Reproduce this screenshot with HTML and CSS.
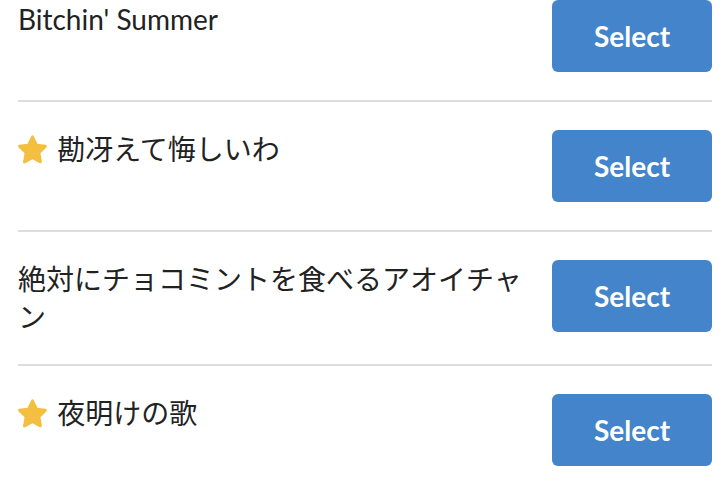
FILE: index.html
```html
<!DOCTYPE html>
<html lang="ja">
<head>
<meta charset="utf-8">
<link rel="stylesheet" href="styles.css">
</head>
<body>
<ul class="list">
  <li class="row">
    <div class="title">Bitchin' Summer</div>
    <button class="select">Select</button>
  </li>
  <li class="row">
    <div class="title"><svg class="star" viewBox="2 2 20 20"><path d="M12 2.2c.4 0 .7.2.9.6l2.5 5.2 5.6.8c.9.1 1.2 1.2.6 1.8l-4.1 4 1 5.7c.2.9-.8 1.5-1.5 1.1L12 18.7l-5 2.7c-.8.4-1.7-.2-1.5-1.1l1-5.7-4.1-4c-.7-.6-.3-1.7.6-1.8l5.6-.8 2.5-5.2c.2-.4.5-.6.9-.6z"/></svg> 勘冴えて悔しいわ</div>
    <button class="select">Select</button>
  </li>
  <li class="row">
    <div class="title">絶対にチョコミントを食べるアオイチャン</div>
    <button class="select">Select</button>
  </li>
  <li class="row">
    <div class="title"><svg class="star" viewBox="2 2 20 20"><path d="M12 2.2c.4 0 .7.2.9.6l2.5 5.2 5.6.8c.9.1 1.2 1.2.6 1.8l-4.1 4 1 5.7c.2.9-.8 1.5-1.5 1.1L12 18.7l-5 2.7c-.8.4-1.7-.2-1.5-1.1l1-5.7-4.1-4c-.7-.6-.3-1.7.6-1.8l5.6-.8 2.5-5.2c.2-.4.5-.6.9-.6z"/></svg> 夜明けの歌</div>
    <button class="select">Select</button>
  </li>
</ul>
</body>
</html>
```
FILE: styles.css
```css
html, body {
  margin: 0;
  padding: 0;
  background: #fff;
}
body {
  font-family: Lato, "Noto Sans CJK JP", sans-serif;
  color: #222;
}
.list {
  list-style: none;
  margin: 0;
  padding: 0 16px 0 18px;
}
.row {
  display: flex;
  align-items: flex-start;
  gap: 20px;
  padding: 28px 0;
  border-bottom: 2px solid #ddd;
}
.row:first-child {
  padding-top: 0;
}
.row:last-child {
  border-bottom: none;
}
.title {
  flex: 1;
  font-size: 28px;
  line-height: 38px;
}
.star {
  width: 29px;
  height: 29px;
  margin-right: 3px;
  fill: #F4BF41;
  vertical-align: -4px;
}
.select {
  flex: none;
  width: 160px;
  height: 72px;
  border: none;
  border-radius: 6px;
  background: #4484CA;
  color: #fff;
  font-family: Lato, sans-serif;
  font-weight: 700;
  font-size: 28px;
  padding: 0;
}
```
